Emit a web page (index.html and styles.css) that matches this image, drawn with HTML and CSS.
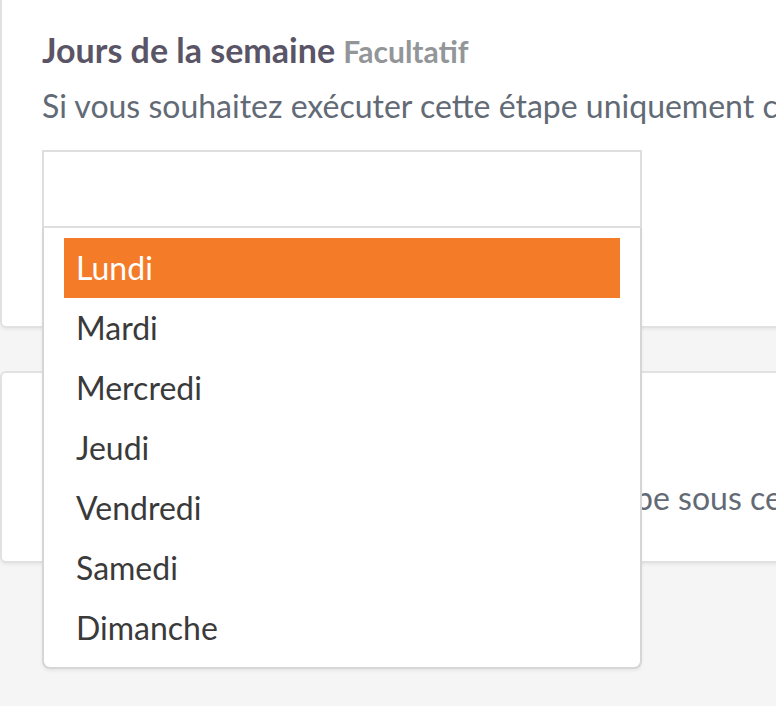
FILE: index.html
```html
<!DOCTYPE html>
<html lang="fr">
<head>
<meta charset="utf-8">
<title>Jours de la semaine</title>
<link rel="stylesheet" href="styles.css">
</head>
<body>
<div class="page">
  <section class="card card-days">
    <h2 class="field-title">Jours de la semaine <span class="optional">Facultatif</span></h2>
    <p class="field-help">Si vous souhaitez exécuter cette étape uniquement certains jours de la semaine</p>
    <div class="select">
      <div class="select-input"></div>
      <ul class="select-dropdown">
        <li class="option is-active">Lundi</li>
        <li class="option">Mardi</li>
        <li class="option">Mercredi</li>
        <li class="option">Jeudi</li>
        <li class="option">Vendredi</li>
        <li class="option">Samedi</li>
        <li class="option">Dimanche</li>
      </ul>
    </div>
  </section>
  <section class="card card-cond">
    <h2 class="field-title">Conditions <span class="optional">Facultatif</span></h2>
    <p class="field-help">Si vous souhaitez plutôt exécuter cette étape sous certaines conditions</p>
  </section>
</div>
</body>
</html>
```

FILE: styles.css
```css
html, body {
  margin: 0;
  padding: 0;
}
body {
  background: #f5f5f5;
  font-family: Lato, "Open Sans", sans-serif;
  overflow: hidden;
  width: 776px;
  height: 706px;
}
.page {
  margin-top: -22px;
  display: flex;
  flex-direction: column;
  gap: 43px;
}
.card {
  width: 1000px;
  background: #fff;
  border: 2px solid #e1e1e1;
  border-radius: 6px;
  box-shadow: 0 2px 3px rgba(0, 0, 0, 0.05);
  padding: 50px 40px 98px 40px;
  box-sizing: border-box;
}
.card-cond {
  padding: 49px 40px 43px 40px;
}
.field-title {
  margin: 0;
  height: 40px;
  font-size: 34px;
  line-height: 40px;
  font-weight: 700;
  color: #5a5566;
  white-space: nowrap;
}
.optional {
  font-size: 30px;
  line-height: 1;
  color: #939699;
}
.field-help {
  margin: 16px 0 0 0;
  font-size: 32px;
  line-height: 40px;
  color: #626a75;
  white-space: nowrap;
}
.select {
  position: relative;
  width: 600px;
  margin-top: 24px;
}
.select-input {
  height: 78px;
  box-sizing: border-box;
  border: 2px solid #dedede;
  background: #fff;
}
.select-dropdown {
  position: absolute;
  left: 0;
  top: 78px;
  width: 600px;
  box-sizing: border-box;
  margin: 0;
  padding: 10px 20px 9px 20px;
  list-style: none;
  background: #fff;
  border: 2px solid #d6d6d6;
  border-top: none;
  border-radius: 0 0 8px 8px;
  box-shadow: 0 2px 3px rgba(0, 0, 0, 0.06);
  z-index: 10;
}
.option {
  height: 60px;
  line-height: 60px;
  padding-left: 12px;
  font-size: 32px;
  color: #3a3a3a;
}
.option.is-active {
  background: #f47b27;
  color: #fff;
}
```
